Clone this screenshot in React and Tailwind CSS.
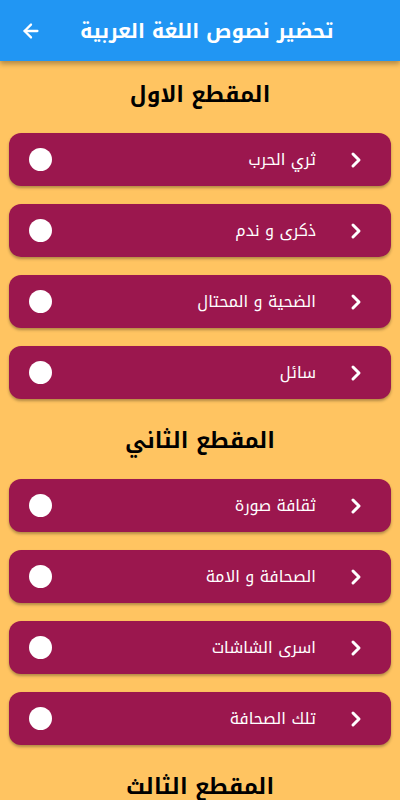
import { ArrowLeft, ChevronRight } from "lucide-react";

const sections = [
  { title: "المقطع الاول", items: ["ثري الحرب", "ذكرى و ندم", "الضحية و المحتال", "سائل"] },
  { title: "المقطع الثاني", items: ["ثقافة صورة", "الصحافة و الامة", "اسرى الشاشات", "تلك الصحافة"] },
  { title: "المقطع الثالث", items: [] },
];

const font = { fontFamily: '"Noto Kufi Arabic", "Noto Sans Arabic", "DejaVu Sans", sans-serif' };

const Item = ({ label }) => (
  <div className="h-[53px] rounded-[12px] bg-[#9b174e] shadow-[0_2px_3px_rgba(0,0,0,0.3)] flex items-center pl-[20px] pr-[23px]">
    <span className="w-[23px] h-[23px] rounded-full bg-white shrink-0" />
    <p dir="rtl" className="flex-1 text-right text-white text-[16px] mr-[28px]" style={font}>
      {label}
    </p>
    <ChevronRight size={24} strokeWidth={3} className="text-white" />
  </div>
);

export default function App() {
  return (
    <div className="w-[400px] h-[800px] overflow-hidden bg-[#ffc461] flex flex-col" style={font}>
      <div className="h-[61px] shrink-0 bg-[#2196f3] shadow-[0_3px_5px_rgba(0,0,0,0.3)] flex items-center pl-[20px] relative z-10">
        <ArrowLeft size={22} strokeWidth={2.5} className="text-white" />
        <h1 dir="rtl" className="ml-[38px] text-white text-[20px] font-bold">
          تحضير نصوص اللغة العربية
        </h1>
      </div>
      {sections.map((s) => (
        <div key={s.title} className="px-[9px] pb-2 shrink-0">
          <h2 dir="rtl" className="h-[72px] flex items-center justify-center pt-px pb-1 text-[22px] font-bold text-black">
            {s.title}
          </h2>
          <div className="flex flex-col gap-[18px]">
            {s.items.map((it) => (
              <Item key={it} label={it} />
            ))}
          </div>
        </div>
      ))}
    </div>
  );
}
